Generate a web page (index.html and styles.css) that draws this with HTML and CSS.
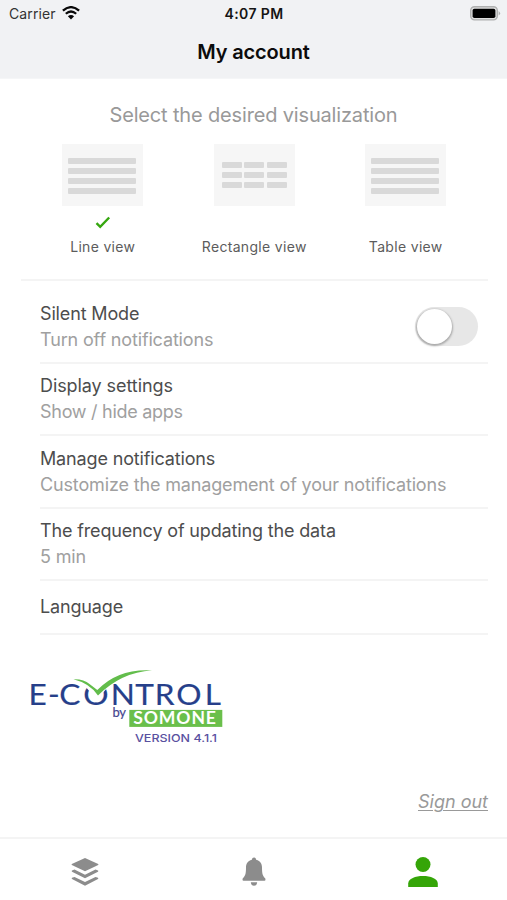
FILE: index.html
```html
<!DOCTYPE html>
<html lang="en">
<head>
<meta charset="utf-8">
<title>My account</title>
<link rel="stylesheet" href="styles.css">
</head>
<body>
<div class="app">
  <header class="header">
    <div class="status">
      <div class="status-left"><span class="carrier">Carrier</span>
        <svg class="wifi" width="18" height="14" viewBox="0 0 18 14" fill="none" stroke="#080808"><path d="M.9 4.7Q9-2.4 17.1 4.7" stroke-width="2.3"/><path d="M3.8 7.8Q9 3.2 14.2 7.8" stroke-width="2.2"/><path d="M9 13.4 5.9 10.2Q9 7.6 12.1 10.2Z" fill="#080808" stroke="none"/></svg>
      </div>
      <span class="time">4:07 PM</span>
      <div class="status-right"><svg width="31" height="15" viewBox="0 0 31 15"><rect x=".7" y=".7" width="26.6" height="13.2" rx="3.8" fill="#e0e0e0" stroke="#afb0b0" stroke-width="1.4"/><rect x="2.6" y="2.7" width="22.8" height="9.3" rx="1.8" fill="#000"/><path d="M28.6 5q3 2.3 0 4.6Z" fill="#afb0b0"/></svg></div>
    </div>
    <h1 class="title">My account</h1>
  </header>

  <main class="main">
    <h2 class="prompt">Select the desired visualization</h2>
    <div class="views">
      <div class="view">
        <div class="thumb lines"><i></i><i></i><i></i><i></i></div>
        <div class="mark"><svg width="16" height="13" viewBox="0 0 16 13"><path d="M1.5 7.2 5.2 10.8 14.2 1.5" fill="none" stroke="#36a710" stroke-width="2.4"/></svg></div>
        <span class="label">Line view</span>
      </div>
      <div class="view">
        <div class="thumb cells"><i></i><i></i><i></i><i></i><i></i><i></i><i></i><i></i><i></i></div>
        <div class="mark"></div>
        <span class="label">Rectangle view</span>
      </div>
      <div class="view">
        <div class="thumb lines"><i></i><i></i><i></i><i></i></div>
        <div class="mark"></div>
        <span class="label">Table view</span>
      </div>
    </div>

    <section class="settings">
      <div class="row first">
        <div><p class="name">Silent Mode</p><p class="desc">Turn off notifications</p></div>
        <div class="toggle"><div class="knob"></div></div>
      </div>
      <div class="row"><div><p class="name wide">Display settings</p><p class="desc tight">Show / hide apps</p></div></div>
      <div class="row"><div><p class="name">Manage notifications</p><p class="desc">Customize the management of your notifications</p></div></div>
      <div class="row flush"><div><p class="name">The frequency of updating the data</p><p class="desc">5 min</p></div></div>
      <div class="row last"><p class="name">Language</p></div>
    </section>

    <svg class="logo" width="200" height="80" viewBox="28 667 200 80">
      <text transform="scale(1.07 1)" x="26.600 44.800 55.400 77.800 103.600 126.400 144.600 164.800 191.300" y="704.400" class="logo-main">E-CONTROL</text>
      <path d="M78 677 97 699 117 675Z" fill="#fff"/>
      <path d="M73.500 678.300Q84 678 89.500 683L97.300 689Q118 667.300 152 669.300Q121 671.500 98 694.500Q90 682.500 73.500 678.300Z" fill="#62bd4b"/>
      <text x="112.500" y="716" class="logo-by" textLength="13.500">by</text>
      <rect x="129.300" y="708.900" width="93" height="17" fill="#6abf4b"/>
      <text x="133.300" y="723.300" class="logo-brand" textLength="83.500" lengthAdjust="spacingAndGlyphs">SOMONE</text>
      <text x="135" y="741" class="logo-version" textLength="82" lengthAdjust="spacingAndGlyphs">VERSION 4.1.1</text>
    </svg>
    <a class="signout">Sign out</a>
  </main>

  <nav class="tabs">
    <div class="tab"><svg width="28" height="30" viewBox="0 0 28 30" fill="#8c8c8c"><path d="M14 1 27.200 7.100Q27.700 7.500 27.200 7.900L14 14.300.8 7.900Q.3 7.500.8 7.100Z"/><path d="M1 13.500 3.500 12.600 14 17.700 24.500 12.600 27 13.500Q27.700 14.100 27 14.700L14 21.300 1 14.700Q.3 14.100 1 13.500Z"/><path d="M1 20.800 3.500 19.900 14 25 24.500 19.900 27 20.800Q27.700 21.400 27 22L14 28.700 1 22Q.3 21.400 1 20.800Z"/></svg></div>
    <div class="tab"><svg width="24" height="30" viewBox="0 0 24 30" fill="#8c8c8c"><path d="M12 .5Q13.900.5 14.200 2.700C18.400 3.700 20 7 20 10.500 20 17 20.800 19 23.200 21.300Q24 23.800 22.500 23.800H1.500Q0 23.800.8 21.300C3.200 19 4 17 4 10.500 4 7 5.600 3.700 9.800 2.700Q10.100.5 12 .5Z"/><path d="M8.800 25.200H15.200Q14.800 28.800 12 28.800T8.800 25.200Z"/></svg></div>
    <div class="tab"><svg width="30" height="31" viewBox="0 0 30 31" fill="#35a508"><circle cx="15" cy="7.500" r="7.500"/><path d="M.2 30V26.500C.2 21.500 7.500 19 15 19S29.800 21.500 29.800 26.500V30Z"/></svg></div>
  </nav>
</div>
</body>
</html>
```

FILE: styles.css
```css
* { box-sizing: border-box; }
body { margin: 0; background: #fff; font-family: Inter, "Liberation Sans", sans-serif; }
h1, h2, p { margin: 0; font-weight: 400; }
svg { display: block; }
.app { width: 507px; height: 900px; display: flex; flex-direction: column; }
.header { height: 79px; background: #f1f2f4; border-bottom: 1px solid #f5f6f7; }
.status { height: 28px; display: grid; grid-template-columns: 1fr auto 1fr; align-items: center; padding: 0 6px 0 7px; }
.status-left { display: flex; gap: 6px; align-items: center; padding-left: 2px; }
.carrier { font-size: 14px; line-height: 20px; color: #333; letter-spacing: .1px; }
.wifi { margin-top: -2px; }
.time { font-size: 14px; line-height: 20px; font-weight: 600; color: #151515; letter-spacing: .4px; }
.status-right { display: flex; justify-content: flex-end; margin-top: -2px; }
.title { font-size: 20px; line-height: 28px; font-weight: 600; color: #0c0c0c; text-align: center; margin-top: 10px; letter-spacing: -.15px; }
.main { flex: 1; display: flex; flex-direction: column; }
.prompt { font-size: 20px; line-height: 28px; color: #999; text-align: center; margin-top: 22px; letter-spacing: -.16px; }
.views { display: grid; grid-template-columns: repeat(3, 151.500px); padding-left: 27px; margin-top: 15px; }
.view { display: flex; flex-direction: column; align-items: center; }
.thumb { width: 81px; height: 62px; background: #f6f6f6; }
.thumb i { background: #d9d9d9; border-radius: 1px; }
.lines { display: flex; flex-direction: column; gap: 4px; padding: 14px 7px 0 6px; }
.lines i { height: 6px; }
.cells { display: grid; grid-template-columns: repeat(3, 20px); grid-auto-rows: 6px; gap: 4px 2.500px; justify-content: center; padding-top: 18px; }
.mark { height: 31px; padding-top: 10px; }
.label { font-size: 14px; line-height: 20px; color: #5c5c5c; white-space: nowrap; letter-spacing: .32px; }
.settings { margin: 22px 19px 0 21px; border-top: 2px solid #f4f4f4; }
.row { height: 72.600px; margin-left: 19px; border-bottom: 2px solid #f4f4f4; display: flex; justify-content: space-between; align-items: center; padding-top: 1px; }
.row.first { height: 82.600px; padding-top: 11px; }
.row.flush { padding-top: 0; }
.row.last { height: 53.500px; padding-top: 0; }
.name, .desc { font-size: 18px; line-height: 26px; white-space: nowrap; letter-spacing: -.15px; }
.name { color: #4d4d4d; }
.name.wide { letter-spacing: -.08px; }
.desc { color: #a0a0a0; }
.desc.tight { letter-spacing: -.28px; }
.toggle { width: 63px; height: 39px; margin-right: 10px; border-radius: 20px; background: #e7e7e7; padding: 2px; }
.knob { width: 35px; height: 35px; border-radius: 50%; background: #fff; box-shadow: 0 1px 2px 1px #aaa; }
.logo { margin: 33px 0 0 28px; }
.logo-main { font-family: Lato, sans-serif; font-size: 29.500px; fill: #263f8a; stroke: #263f8a; stroke-width: .2px; }
.logo-by { font-family: Lato, sans-serif; font-size: 13px; fill: #45458f; stroke: #45458f; stroke-width: .2px; }
.logo-brand { font-family: Lato, sans-serif; font-size: 16.500px; font-weight: 700; fill: #fff; letter-spacing: .8px; }
.logo-version { font-size: 11px; font-weight: 500; fill: #59519f; }
.signout { align-self: flex-end; margin: 42px 19px 0 0; font-size: 18px; line-height: 24px; font-style: italic; color: #999; text-decoration: underline; text-underline-offset: 2px; text-decoration-thickness: 1px; }
.tabs { height: 63px; border-top: 2px solid #f4f4f4; display: grid; grid-template-columns: repeat(3, 1fr); padding-top: 18px; }
.tab { display: flex; justify-content: center; }
```
